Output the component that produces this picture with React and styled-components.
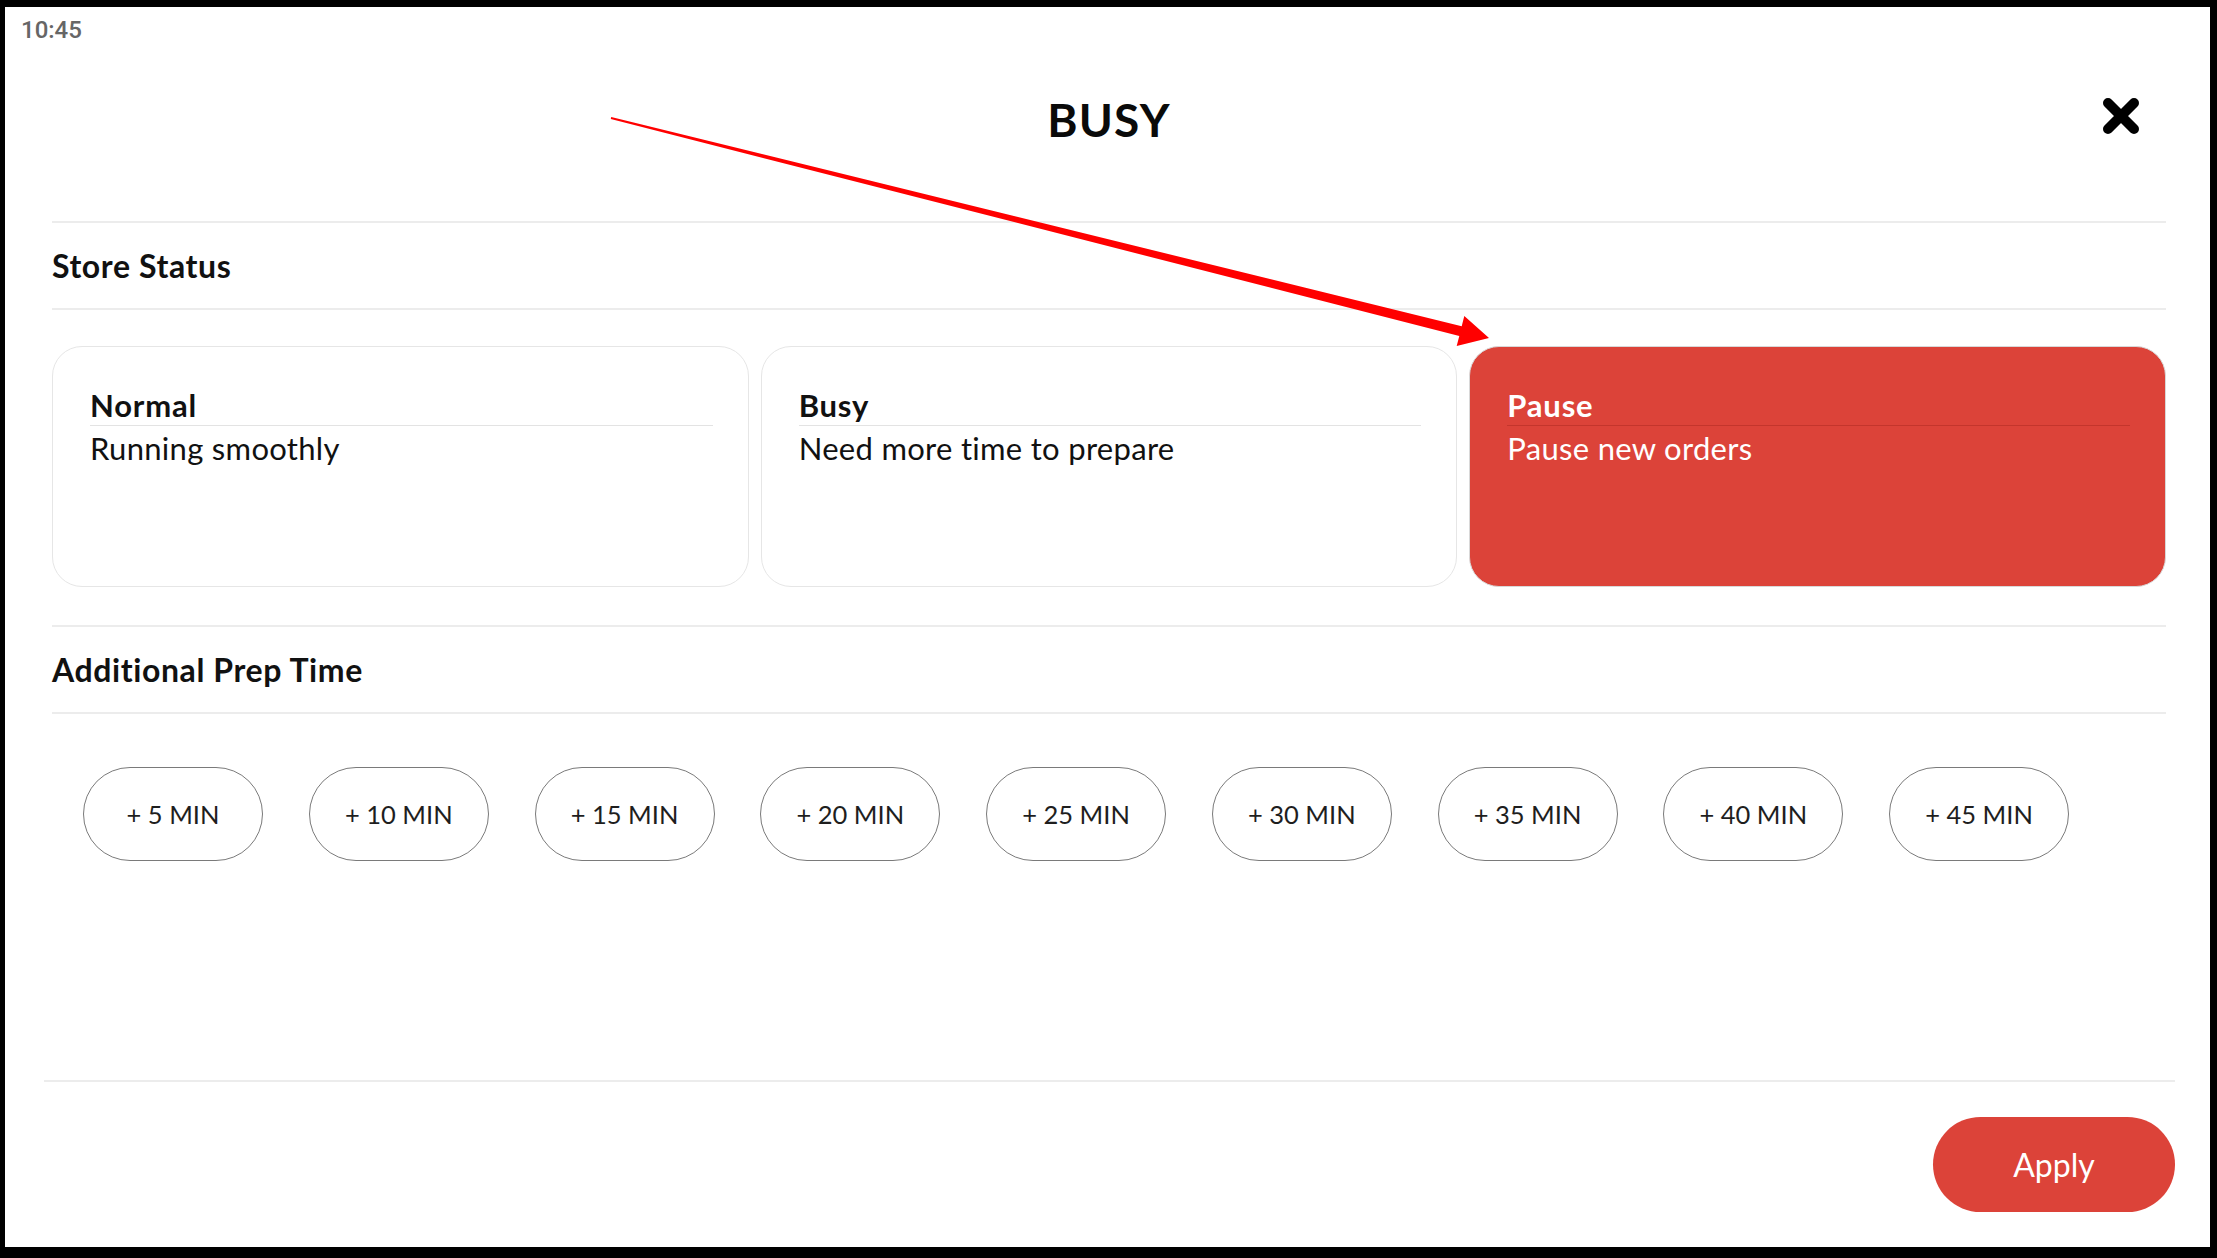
import React, { useState } from 'react';
import styled, { createGlobalStyle } from 'styled-components';

const GlobalStyle = createGlobalStyle`
  html, body {
    margin: 0;
    padding: 0;
    background: #000;
  }
  body {
    font-family: Lato, "Noto Sans", sans-serif;
    color: #111;
  }
`;

const statuses = [
  { id: 'normal', title: 'Normal', description: 'Running smoothly' },
  { id: 'busy', title: 'Busy', description: 'Need more time to prepare' },
  { id: 'pause', title: 'Pause', description: 'Pause new orders' },
];

const prepTimes = [5, 10, 15, 20, 25, 30, 35, 40, 45];

export default function App() {
  const [status, setStatus] = useState('pause');
  const [extra, setExtra] = useState(null);

  return (
    <>
      <GlobalStyle />
      <Screen>
        <Panel>
          <StatusBar>10:45</StatusBar>

          <Body>
            <Header>
              <span />
              <Title>BUSY</Title>
              <CloseButton aria-label="Close">
                <svg width="40" height="40" viewBox="0 0 40 40">
                  <path
                    d="M7 7 L33 33 M33 7 L7 33"
                    stroke="#000"
                    strokeWidth="10"
                    strokeLinecap="round"
                  />
                </svg>
              </CloseButton>
            </Header>

            <SectionHead>Store Status</SectionHead>

            <CardRow>
              {statuses.map((s) => (
                <StatusCard
                  key={s.id}
                  $active={status === s.id}
                  onClick={() => setStatus(s.id)}
                >
                  <CardTitle $active={status === s.id}>{s.title}</CardTitle>
                  <CardText>{s.description}</CardText>
                </StatusCard>
              ))}
            </CardRow>

            <SectionHead>Additional Prep Time</SectionHead>

            <PillRow>
              {prepTimes.map((m) => (
                <Pill key={m} $active={extra === m} onClick={() => setExtra(m)}>
                  + {m} MIN
                </Pill>
              ))}
            </PillRow>
          </Body>

          <Footer>
            <ApplyButton>Apply</ApplyButton>
          </Footer>
        </Panel>

        {/* annotation arrow drawn over the screenshot */}
        <Annotation viewBox="0 0 2217 1258">
          <polygon
            fill="#ff0000"
            points="611.2,117 1461.7,326.2 1464.3,315.9 1489,338 1456.7,346.1 1459.3,335.9 610.8,119"
          />
        </Annotation>
      </Screen>
    </>
  );
}

const Screen = styled.div`
  position: relative;
  width: 2217px;
  height: 1258px;
  box-sizing: border-box;
  padding: 7px 7px 11px 5px;
  background: #000;
`;

const Panel = styled.div`
  height: 100%;
  background: #fff;
  display: flex;
  flex-direction: column;
`;

const StatusBar = styled.div`
  height: 40px;
  box-sizing: border-box;
  padding: 9px 0 0 16px;
  font-family: Roboto, "Noto Sans", sans-serif;
  font-weight: 500;
  font-size: 24px;
  color: #666;
`;

const Body = styled.div`
  padding: 0 44px 0 47px;
`;

const Header = styled.div`
  display: grid;
  grid-template-columns: 1fr auto 1fr;
  align-items: center;
  height: 144px;
  margin-bottom: 30px;
`;

const Title = styled.h1`
  margin: 0;
  font-size: 46px;
  font-weight: 700;
  letter-spacing: 1.2px;
  color: #0a0a0a;
`;

const CloseButton = styled.button`
  justify-self: end;
  margin-right: 25px;
  margin-top: -6px;
  padding: 0;
  border: none;
  background: none;
  display: flex;
  cursor: pointer;
`;

const SectionHead = styled.div`
  box-sizing: border-box;
  height: 89px;
  display: flex;
  align-items: center;
  border-top: 2px solid #ececec;
  border-bottom: 2px solid #ececec;
  font-size: 32px;
  font-weight: 700;
  letter-spacing: 0.6px;
  color: #111;
`;

const CardRow = styled.div`
  display: grid;
  grid-template-columns: repeat(3, 1fr);
  gap: 12px;
  margin: 36px 0 38px;
`;

const StatusCard = styled.div`
  box-sizing: border-box;
  height: 241px;
  padding: 40px 35px 0 37px;
  border-radius: 30px;
  border: 1.5px solid ${(p) => (p.$active ? '#d8d8d8' : '#e6e6e6')};
  background: ${(p) => (p.$active ? '#dc4339' : '#fff')};
  color: ${(p) => (p.$active ? '#fff' : '#111')};
  cursor: pointer;
`;

const CardTitle = styled.div`
  font-size: 31px;
  font-weight: 700;
  letter-spacing: 0.8px;
  line-height: 36px;
  padding-bottom: 2px;
  border-bottom: 1.5px solid ${(p) => (p.$active ? '#c4352c' : '#e3e3e3')};
`;

const CardText = styled.div`
  margin-top: 4px;
  font-size: 31px;
  line-height: 36px;
  letter-spacing: 0.3px;
`;

const PillRow = styled.div`
  display: flex;
  gap: 45.75px;
  margin-top: 53px;
  padding-left: 31px;
`;

const Pill = styled.button`
  width: 180px;
  height: 94px;
  box-sizing: border-box;
  border-radius: 47px;
  border: 1.5px solid ${(p) => (p.$active ? '#dc4339' : '#7a7a7a')};
  background: #fff;
  font-family: Lato, "Noto Sans", sans-serif;
  font-size: 25.5px;
  color: #1e1e1e;
  cursor: pointer;
  padding: 0;
`;

const Footer = styled.div`
  margin: auto 35px 0 39px;
  padding: 35px 0;
  border-top: 2px solid #ececec;
  display: flex;
  justify-content: flex-end;
`;

const ApplyButton = styled.button`
  width: 242px;
  height: 95px;
  border: none;
  border-radius: 48px;
  background: #dc4339;
  color: #fff;
  font-family: Lato, "Noto Sans", sans-serif;
  font-size: 32px;
  cursor: pointer;
`;

const Annotation = styled.svg`
  position: absolute;
  left: 0;
  top: 0;
  width: 2217px;
  height: 1258px;
  pointer-events: none;
`;
